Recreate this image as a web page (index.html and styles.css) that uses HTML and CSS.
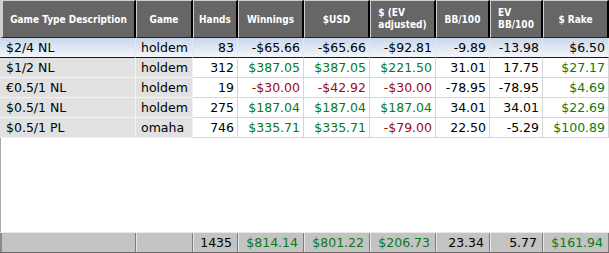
FILE: index.html
```html
<!DOCTYPE html>
<html>
<head>
<meta charset="utf-8">
<link rel="stylesheet" href="styles.css">
</head>
<body>
<div class="grid">
  <div class="row head">
    <div class="hc first"><span>Game Type Description</span></div>
    <div class="hc"><span>Game</span></div>
    <div class="hc"><span>Hands</span></div>
    <div class="hc"><span>Winnings</span></div>
    <div class="hc"><span>$USD</span></div>
    <div class="hc"><span class="wrap">$ (EV<br>adjusted)</span></div>
    <div class="hc"><span>BB/100</span></div>
    <div class="hc"><span class="wrap">EV<br>BB/100</span></div>
    <div class="hc"><span>$ Rake</span></div>
  </div>
  <div class="row body sel">
    <div class="c t">$2/4 NL</div><div class="c t">holdem</div><div class="c">83</div>
    <div class="c">-$65.66</div><div class="c">-$65.66</div><div class="c">-$92.81</div>
    <div class="c">-9.89</div><div class="c">-13.98</div><div class="c">$6.50</div>
  </div>
  <div class="row body">
    <div class="c t">$1/2 NL</div><div class="c t">holdem</div><div class="c">312</div>
    <div class="c g">$387.05</div><div class="c g">$387.05</div><div class="c g">$221.50</div>
    <div class="c">31.01</div><div class="c">17.75</div><div class="c g">$27.17</div>
  </div>
  <div class="row body">
    <div class="c t">€0.5/1 NL</div><div class="c t">holdem</div><div class="c">19</div>
    <div class="c r">-$30.00</div><div class="c r">-$42.92</div><div class="c r">-$30.00</div>
    <div class="c">-78.95</div><div class="c">-78.95</div><div class="c g">$4.69</div>
  </div>
  <div class="row body">
    <div class="c t">$0.5/1 NL</div><div class="c t">holdem</div><div class="c">275</div>
    <div class="c g">$187.04</div><div class="c g">$187.04</div><div class="c g">$187.04</div>
    <div class="c">34.01</div><div class="c">34.01</div><div class="c g">$22.69</div>
  </div>
  <div class="row body">
    <div class="c t">$0.5/1 PL</div><div class="c t">omaha</div><div class="c">746</div>
    <div class="c g">$335.71</div><div class="c g">$335.71</div><div class="c r">-$79.00</div>
    <div class="c">22.50</div><div class="c">-5.29</div><div class="c g">$100.89</div>
  </div>
  <div class="empty"></div>
  <div class="row foot">
    <div class="f"></div><div class="f"></div><div class="f">1435</div>
    <div class="f g">$814.14</div><div class="f g">$801.22</div><div class="f g">$206.73</div>
    <div class="f">23.34</div><div class="f">5.77</div><div class="f g">$161.94</div>
  </div>
</div>
</body>
</html>
```
FILE: styles.css
```css
html, body {
  margin: 0;
  padding: 0;
  background: #ffffff;
}
.grid {
  width: 609px;
  height: 253px;
  display: flex;
  flex-direction: column;
  font-family: "DejaVu Sans", Verdana, sans-serif;
  font-size: 12.5px;
  color: #000;
}
.row {
  display: grid;
  grid-template-columns: 136px 57px 45px 66px 66px 66px 54px 53px 66px;
}
.head {
  height: 38px;
}
.hc {
  box-sizing: border-box;
  background: #666666;
  border-top: 1px solid #cfcfcf;
  border-left: 1px solid #cfcfcf;
  border-right: 2px solid #000;
  border-bottom: 1px solid #222;
  color: #fff;
  font-family: "DejaVu Sans Condensed", "DejaVu Sans", sans-serif;
  font-stretch: condensed;
  font-weight: bold;
  font-size: 10px;
  display: flex;
  align-items: center;
  justify-content: center;
}
.hc.first {
  border-left: 3px solid #cfcfcf;
}
.hc .wrap {
  text-align: left;
  line-height: 12px;
}
.body {
  height: 20px;
}
.c {
  box-sizing: border-box;
  background: #fff;
  border-right: 1px solid #d6d6d6;
  border-bottom: 1px solid #d6d6d6;
  line-height: 19px;
  text-align: right;
  padding-right: 3px;
  white-space: nowrap;
  overflow: hidden;
}
.c.t {
  background: #e1e1e1;
  border-right-color: #f2f2f2;
  border-bottom-color: #f2f2f2;
  text-align: left;
  padding-left: 6px;
}
.c.t + .c.t {
  padding-left: 5px;
}
.sel .c, .sel .c.t {
  background: linear-gradient(#c9d7eb, #f3f6fb);
  border-bottom: 1px solid #1a1a1a;
  border-right-color: #e4e9f1;
}
.g { color: #0a7a14; }
.r { color: #a00a0a; }
.empty {
  flex: 1;
  box-shadow: inset 1px 0 0 #a8a8a8;
}
.foot {
  height: 21px;
  background: #c0c0c0;
  border-top: 1px solid #e8e8e8;
  border-bottom: 1px solid #6a6a6a;
  box-sizing: border-box;
}
.f {
  box-sizing: border-box;
  background: #c3c3c3;
  border-left: 1px solid #e6e6e6;
  border-right: 1px solid #7d7d7d;
  line-height: 19px;
  text-align: right;
  padding-right: 5px;
  white-space: nowrap;
}
.foot .f:first-child {
  border-left: 2px solid #8a8a8a;
}
```
